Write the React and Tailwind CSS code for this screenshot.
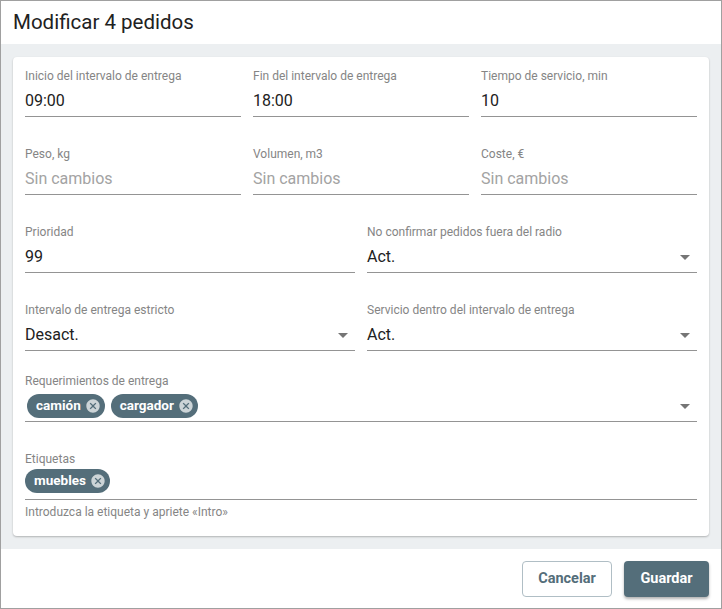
import React from "react";

const ArrowDrop = () => (
  <svg width="24" height="24" viewBox="0 0 24 24" className="shrink-0">
    <path d="M7 10l5 5 5-5z" fill="#757575" />
  </svg>
);

const CancelIcon = () => (
  <svg width="16" height="16" viewBox="0 0 24 24" className="-ml-1 mr-1 shrink-0">
    <path
      fill="#ccd4d7"
      d="M12 2C6.47 2 2 6.47 2 12s4.47 10 10 10 10-4.47 10-10S17.53 2 12 2zm5 13.59L15.59 17 12 13.41 8.41 17 7 15.59 10.59 12 7 8.41 8.41 7 12 10.59 15.59 7 17 8.41 13.41 12 17 15.59z"
    />
  </svg>
);

const Chip = ({ label, className = "" }) => (
  <span
    className={
      "inline-flex h-6 items-center rounded-full bg-[#546e7a] pl-[9px] text-[13.5px] font-bold text-white " +
      className
    }
  >
    <span className="pr-2 leading-none">{label}</span>
    <CancelIcon />
  </span>
);

const Field = ({ label, value, placeholder, select }) => (
  <div className="flex min-w-0 flex-col">
    <div className="h-4 text-[12px] leading-4 text-[#858585]">{label}</div>
    <div className="mt-[5px] flex h-6 items-center justify-between border-b border-[#949494] pb-[3px] box-content">
      <span
        className={
          "text-[16px] leading-6 " + (placeholder ? "text-[#a3a3a3]" : "text-[#212121]")
        }
      >
        {value}
      </span>
      {select && <ArrowDrop />}
    </div>
  </div>
);

export default function App() {
  return (
    <div
      className="flex h-[609px] w-[722px] flex-col border border-[#a0a0a0] bg-white"
      style={{ fontFamily: "Roboto, 'Noto Sans', sans-serif" }}
    >
      <div className="flex h-[43px] shrink-0 items-center pl-3">
        <h1 className="text-[20.5px] font-normal text-[#212121]">Modificar 4 pedidos</h1>
      </div>

      <div className="flex-1 bg-[#eceff1] px-3 pt-[13px] pb-[13px]">
        <div className="h-full rounded bg-white px-3 pt-[11px] pb-4 shadow-[0_1px_2px_rgba(0,0,0,0.25)]">
          <div className="grid grid-cols-3 gap-x-3">
            <Field label="Inicio del intervalo de entrega" value="09:00" />
            <Field label="Fin del intervalo de entrega" value="18:00" />
            <Field label="Tiempo de servicio, min" value="10" />
          </div>
          <div className="mt-[29px] grid grid-cols-3 gap-x-3">
            <Field label="Peso, kg" value="Sin cambios" placeholder />
            <Field label="Volumen, m3" value="Sin cambios" placeholder />
            <Field label="Coste, €" value="Sin cambios" placeholder />
          </div>
          <div className="mt-[29px] grid grid-cols-2 gap-x-3">
            <Field label="Prioridad" value="99" />
            <Field label="No confirmar pedidos fuera del radio" value="Act." select />
          </div>
          <div className="mt-[29px] grid grid-cols-2 gap-x-3">
            <Field label="Intervalo de entrega estricto" value="Desact." select />
            <Field label="Servicio dentro del intervalo de entrega" value="Act." select />
          </div>

          <div className="mt-[22px] flex flex-col">
            <div className="h-4 text-[12px] leading-4 text-[#858585]">Requerimientos de entrega</div>
            <div className="mt-[5px] flex h-6 items-center justify-between border-b border-[#949494] pb-[3px] box-content">
              <div className="flex items-center gap-[6px] pl-[2px]">
                <Chip label="camión" />
                <Chip label="cargador" />
              </div>
              <ArrowDrop />
            </div>
          </div>

          <div className="mt-[29px] flex flex-col">
            <div className="h-4 text-[12px] leading-4 text-[#858585]">Etiquetas</div>
            <div className="mt-[2px] flex h-6 items-center border-b border-[#949494] pb-[6px] box-content">
              <Chip label="muebles" />
            </div>
            <div className="mt-1 text-[12px] leading-4 text-[#858585]">
              Introduzca la etiqueta y apriete «Intro»
            </div>
          </div>
        </div>
      </div>

      <div className="flex h-[59px] shrink-0 items-center justify-end gap-3 pr-3">
        <button className="flex h-9 w-[90px] items-center justify-center rounded border border-[#b0bec5] bg-white text-[14.5px] font-bold text-[#546e7a]">
          Cancelar
        </button>
        <button className="flex h-9 w-[85px] items-center justify-center rounded bg-[#546e7a] text-[14.5px] font-bold text-white shadow-[0_2px_3px_rgba(0,0,0,0.3)]">
          Guardar
        </button>
      </div>
    </div>
  );
}
